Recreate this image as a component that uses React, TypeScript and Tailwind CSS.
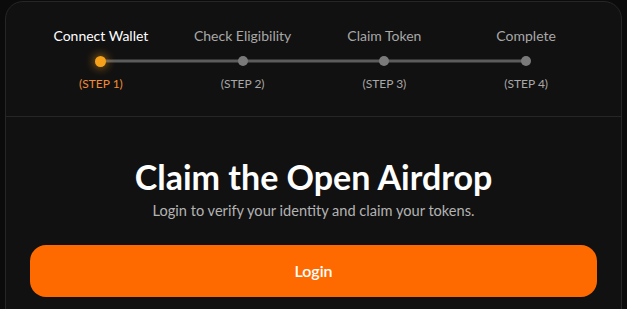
const steps = [
  { label: "Connect Wallet", step: "(STEP 1)" },
  { label: "Check Eligibility", step: "(STEP 2)" },
  { label: "Claim Token", step: "(STEP 3)" },
  { label: "Complete", step: "(STEP 4)" },
];

export default function App() {
  const active = 0;

  return (
    <div
      className="min-h-screen bg-[#0b0b0b] px-[5px] pt-[1px]"
      style={{ fontFamily: "Lato, 'Open Sans', sans-serif" }}
    >
      <div className="w-[617px] min-h-[330px] rounded-[18px] border border-[#262626] bg-[#121111]">
        {/* stepper */}
        <div className="px-6 pt-[24px] pb-[24px]">
          <div className="grid grid-cols-4">
            {steps.map((s, i) => (
              <div
                key={s.label}
                className={`text-center text-[14px] leading-5 ${i === active ? "text-white" : "text-[#a8a8a8]"}`}
              >
                {s.label}
              </div>
            ))}
          </div>

          <div className="relative mt-[9px] grid h-3 grid-cols-4">
            <div className="absolute left-[71px] right-[71px] top-1/2 h-[3px] -translate-y-1/2 bg-[#5c5c5c]" />
            {steps.map((s, i) => (
              <div key={s.label} className="relative flex items-center justify-center">
                {i === active ? (
                  <span className="h-[11px] w-[11px] rounded-full bg-[#f7a11a] shadow-[0_0_8px_2px_rgba(247,161,26,0.45)]" />
                ) : (
                  <span className="h-[10px] w-[10px] rounded-full bg-[#7a7a7a]" />
                )}
              </div>
            ))}
          </div>

          <div className="mt-[9px] grid grid-cols-4">
            {steps.map((s, i) => (
              <div
                key={s.step}
                className={`text-center text-[12px] leading-4 ${i === active ? "text-[#f08c33]" : "text-[#a8a8a8]"}`}
              >
                {s.step}
              </div>
            ))}
          </div>
        </div>

        <div className="h-px bg-[#262626]" />

        {/* claim */}
        <div className="px-6 pt-[42px]">
          <h1 className="text-center text-[34px] font-bold leading-9 text-white">
            Claim the Open Airdrop
          </h1>
          <p className="mt-[6px] text-center text-[14.6px] leading-5 text-[#b3b3b3]">
            Login to verify your identity and claim your tokens.
          </p>
          <button className="mt-6 flex h-[52px] w-full items-center justify-center rounded-[16px] bg-[#ff6a00] text-[16px] font-semibold text-white">
            Login
          </button>
        </div>
      </div>
    </div>
  );
}
